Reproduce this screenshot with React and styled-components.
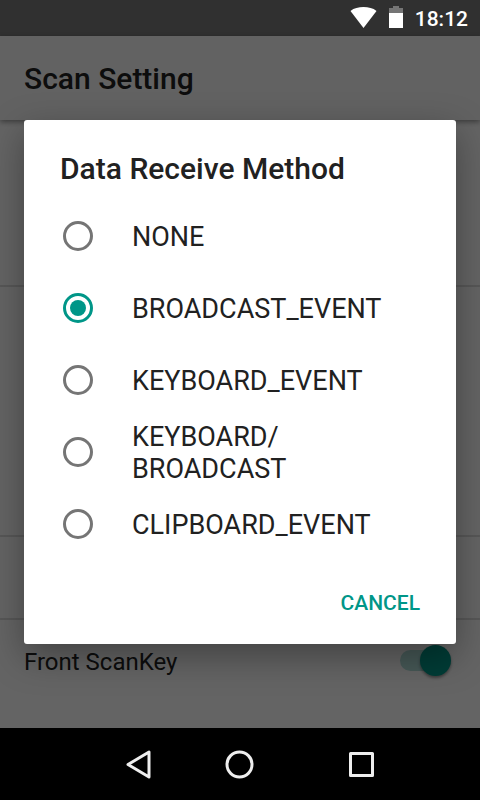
import React, { useState } from "react";
import styled, { createGlobalStyle } from "styled-components";

const GlobalStyle = createGlobalStyle`
  * {
    box-sizing: border-box;
  }

  body {
    margin: 0;
    font-family: Roboto, "Liberation Sans", sans-serif;
    color: #212121;
    background: #000;
  }
`;

const Screen = styled.div`
  display: flex;
  flex-direction: column;
  min-height: 100vh;
`;

const StatusBar = styled.header`
  display: flex;
  align-items: center;
  justify-content: flex-end;
  gap: 12px;
  height: 36px;
  padding: 0 12px;
  background: #303030;
`;

const Clock = styled.time`
  padding-top: 2px;
  font-size: 21px;
  font-weight: 500;
  line-height: 24px;
  color: #fff;
`;

const Window = styled.div`
  position: relative;
  display: flex;
  flex: 1;
  flex-direction: column;
  background: #fafafa;
`;

const AppBar = styled.div`
  display: flex;
  align-items: center;
  height: 84px;
  padding: 2px 24px 0;
  background: #f5f5f5;
  box-shadow: 0 2px 5px rgba(0, 0, 0, 0.4);
`;

const AppTitle = styled.h1`
  margin: 0;
  font-size: 30px;
  font-weight: 500;
  line-height: 36px;
`;

const Preferences = styled.div`
  display: flex;
  flex-direction: column;
`;

const Group = styled.div`
  height: ${(props) => props.$height}px;
  border-bottom: 2px solid #dadada;
`;

const Preference = styled.label`
  display: flex;
  align-items: center;
  justify-content: space-between;
  height: 81px;
  padding: 0 29px 0 24px;
  font-size: 24px;
  line-height: 30px;
`;

const Label = styled.span`
  min-width: 0;
  padding-top: 2px;
`;

const Switch = styled.input`
  position: relative;
  width: 51px;
  height: 31px;
  margin: 0;
  appearance: none;

  &::before {
    content: "";
    position: absolute;
    inset: 5px 5px 5px 0;
    border-radius: 11px;
    background: rgba(0, 150, 136, 0.3);
  }

  &::after {
    content: "";
    position: absolute;
    top: 0;
    left: 0;
    width: 31px;
    height: 31px;
    border-radius: 50%;
    background: #f1f1f1;
    box-shadow: 0 2px 3px rgba(0, 0, 0, 0.4);
  }

  &:checked::after {
    left: 20px;
    background: #009688;
  }
`;

const Scrim = styled.div`
  position: absolute;
  inset: 0;
  display: flex;
  align-items: center;
  padding: 0 24px;
  background: rgba(0, 0, 0, 0.6);
`;

const Dialog = styled.form`
  flex: 1;
  min-width: 0;
  border-radius: 3px;
  background: #fff;
  box-shadow: 0 12px 36px rgba(0, 0, 0, 0.35);
`;

const DialogTitle = styled.h2`
  margin: 0;
  padding: 30px 36px 12px;
  font-size: 30px;
  font-weight: 500;
  line-height: 38px;
`;

const Option = styled.label`
  display: flex;
  align-items: center;
  gap: 39px;
  height: 72px;
  padding: 0 36px 0 39px;
  font-size: 27px;
  line-height: 32px;
`;

const Radio = styled.input`
  display: grid;
  flex: none;
  place-items: center;
  width: 30px;
  height: 30px;
  margin: 0;
  border: 3px solid #757575;
  border-radius: 50%;
  appearance: none;

  &:checked {
    border-color: #009688;
  }

  &:checked::before {
    content: "";
    width: 16px;
    height: 16px;
    border-radius: 50%;
    background: #009688;
  }
`;

const Actions = styled.div`
  display: flex;
  align-items: center;
  justify-content: flex-end;
  height: 84px;
  padding: 2px 24px 0;
`;

const FlatButton = styled.button`
  height: 54px;
  padding: 0 12px;
  border: 0;
  background: none;
  font-family: inherit;
  font-size: 21px;
  font-weight: 500;
  color: #009688;
`;

const NavBar = styled.nav`
  display: flex;
  justify-content: center;
  height: 72px;
  background: #000;
`;

const NavButton = styled.button`
  display: grid;
  place-items: center;
  width: 122px;
  padding: 0;
  border: 0;
  background: none;

  svg {
    fill: none;
    stroke: #eee;
    stroke-width: 3;
    stroke-linejoin: round;
  }
`;

const WifiIcon = () => (
  <svg width="27" height="24" viewBox="0 0 27 24">
    <path d="M13.5 22 0.5 5C4 2 8.5 1 13.5 1S23 2 26.5 5Z" fill="#fff" />
  </svg>
);

const BatteryIcon = () => (
  <svg width="14" height="24" viewBox="0 0 14 24">
    <path d="M4 0h6v2h4v6H0V2h4z" fill="#757575" />
    <path d="M0 7h14v15H0z" fill="#fff" />
  </svg>
);

const methods = [
  "NONE",
  "BROADCAST_EVENT",
  "KEYBOARD_EVENT",
  "KEYBOARD/BROADCAST",
  "CLIPBOARD_EVENT",
];

// lets a long name wrap after its slash
const MethodName = ({ name }) =>
  name.split("/").map((part, i) => (
    <React.Fragment key={part}>
      {i > 0 && (
        <>
          /<wbr />
        </>
      )}
      {part}
    </React.Fragment>
  ));

export default function App() {
  const [method, setMethod] = useState("BROADCAST_EVENT");
  const [frontKey, setFrontKey] = useState(true);

  return (
    <>
      <GlobalStyle />
      <Screen>
        <StatusBar>
          <WifiIcon />
          <BatteryIcon />
          <Clock>18:12</Clock>
        </StatusBar>

        <Window>
          <AppBar>
            <AppTitle>Scan Setting</AppTitle>
          </AppBar>
          <Preferences>
            {/* groups that stay behind the dialog */}
            <Group $height={167} />
            <Group $height={250} />
            <Group $height={83} />
            <Preference>
              <Label>Front ScanKey</Label>
              <Switch
                type="checkbox"
                checked={frontKey}
                onChange={(e) => setFrontKey(e.target.checked)}
              />
            </Preference>
          </Preferences>

          <Scrim>
            <Dialog>
              <DialogTitle>Data Receive Method</DialogTitle>
              {methods.map((name) => (
                <Option key={name}>
                  <Radio
                    type="radio"
                    name="method"
                    checked={method === name}
                    onChange={() => setMethod(name)}
                  />
                  <Label>
                    <MethodName name={name} />
                  </Label>
                </Option>
              ))}
              <Actions>
                <FlatButton type="button">CANCEL</FlatButton>
              </Actions>
            </Dialog>
          </Scrim>
        </Window>

        <NavBar>
          <NavButton aria-label="Back">
            {/* the arrow sits towards the home button */}
            <svg width="72" height="30" viewBox="0 0 72 30">
              <path d="M67 3V28L46 15.5Z" />
            </svg>
          </NavButton>
          <NavButton aria-label="Home">
            <svg width="30" height="30" viewBox="0 0 30 30">
              <circle cx="14.5" cy="15.5" r="12.5" />
            </svg>
          </NavButton>
          <NavButton aria-label="Recent apps">
            <svg width="30" height="30" viewBox="0 0 30 30">
              <path d="M3.5 4.5h22v22h-22z" />
            </svg>
          </NavButton>
        </NavBar>
      </Screen>
    </>
  );
}
